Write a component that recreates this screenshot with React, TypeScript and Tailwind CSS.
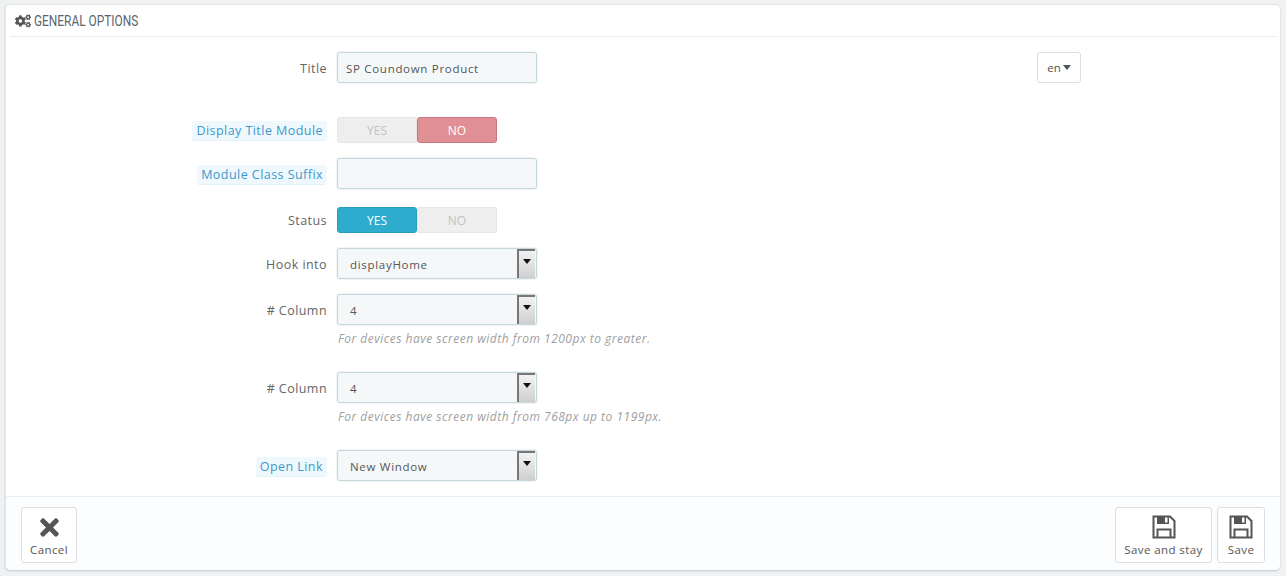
import { FaCogs, FaTimes } from "react-icons/fa";

const font = { fontFamily: '"Open Sans", sans-serif' };

function Label({ text, hint, tight }: { text: string; hint?: boolean; tight?: boolean }) {
  return (
    <div className="w-[331px] flex justify-end pr-[10px] shrink-0">
      {hint ? (
        <span className="mt-[2px] bg-[#eff8fd] text-[#3a98cc] rounded-[3px] px-[4px] h-[20px] leading-[20px] text-[12.5px] tracking-[0.45px] border-b border-[#e3f1fa]">{text}</span>
      ) : (
        <span className={tight ? "mt-[2px] text-[#666] text-[12.5px] tracking-[0.45px]" : "mt-[4px] text-[#666] text-[12.5px] tracking-[0.45px]"}>{text}</span>
      )}
    </div>
  );
}

function TextBox({ value }: { value?: string }) {
  return (
    <div className="w-[200px] h-[31px] bg-[#f5f8f9] border border-[#c7d6db] rounded-[3px] shadow-[0_0_0_1px_rgba(199,214,219,0.25)] pl-[8px] leading-[31px] text-[11.5px] tracking-[0.7px] text-[#555]">
      {value}
    </div>
  );
}

function Toggle({ on }: { on: "yes" | "no" }) {
  return (
    <div className="w-[160px] h-[26px] flex text-[12px] leading-[25px] text-center">
      <div className={on === "yes" ? "w-[80px] bg-[#2eacce] border border-[#2a9dbd] rounded-[3px] text-white" : "w-[80px] bg-[#eeeeee] border border-[#e6e6e6] rounded-l-[3px] text-[#c2c2c2]"}>YES</div>
      <div className={on === "no" ? "w-[80px] bg-[#e08f95] border border-[#c9777e] rounded-[3px] text-white" : "w-[80px] bg-[#eeeeee] border border-[#e6e6e6] rounded-r-[3px] text-[#c2c2c2]"}>NO</div>
    </div>
  );
}

function Select({ value }: { value: string }) {
  return (
    <div className="w-[200px] h-[31px] bg-[#f5f8f9] border border-[#c7d6db] rounded-[3px] shadow-[0_0_0_1px_rgba(199,214,219,0.25)] flex justify-between items-stretch">
      <span className="pl-[12px] leading-[31px] text-[11.5px] tracking-[0.7px] text-[#555]">{value}</span>
      <div className="w-[18px] mr-[1px] bg-gradient-to-b from-[#f2f2f2] to-[#cfcfcf] border-l-2 border-t-2 border-[#777] flex justify-center pt-[8px]">
        <div className="w-0 h-0 border-x-[4px] border-x-transparent border-t-[5px] border-t-[#111]" />
      </div>
    </div>
  );
}

function Help({ text }: { text: string }) {
  return <p className="mt-[6px] pl-[1px] h-[16px] leading-[16px] text-[12px] italic tracking-[0.5px] text-[#a0a0a0] whitespace-nowrap">{text}</p>;
}

function Floppy() {
  return (
    <svg width="24" height="24" viewBox="0 0 24 24" className="text-[#555]">
      <path d="M1.5 1.5H18L22.5 6V22.5H1.5Z" fill="none" stroke="currentColor" strokeWidth="2" />
      <path d="M5 1.5H17V9H5Z" fill="currentColor" />
      <rect x="13" y="2.5" width="2.5" height="5" fill="#fff" />
      <path d="M5.5 22V14.5H18.5V22" fill="none" stroke="currentColor" strokeWidth="2" />
    </svg>
  );
}

function FootButton({ w, icon, label }: { w: string; icon: React.ReactNode; label: string }) {
  return (
    <div className={`${w} h-[56px] bg-white border border-[#dedede] rounded-[3px] flex flex-col items-center pt-[7px]`}>
      <div className="h-[24px] flex items-center">{icon}</div>
      <span className="mt-[3px] text-[11.5px] tracking-[0.4px] text-[#555] whitespace-nowrap leading-[16px]">{label}</span>
    </div>
  );
}

export default function App() {
  return (
    <div style={font} className="w-[1286px] h-[576px] bg-[#eff1f2] pt-[4px] pl-[5px] overflow-hidden">
      <div className="w-[1275px] h-[566px] bg-white rounded-[5px] border-l border-t border-[#e2e5e6] shadow-[0_1px_2px_rgba(0,0,0,0.18)] flex flex-col">
        <div className="mx-[4px] h-[32px] border-b border-[#eaeded] flex items-center pl-[5px] gap-[3px] text-[#555] shrink-0">
          <FaCogs className="text-[16px] text-[#555]" />
          <span className="mt-[2px] text-[14.5px] scale-x-[0.82] origin-left text-[#5a6570]" style={{ fontFamily: "Roboto, sans-serif" }}>GENERAL OPTIONS</span>
        </div>

        <div className="flex-1">
          <div className="mt-[15px] flex items-center">
            <Label text="Title" />
            <TextBox value="SP Coundown Product" />
            <div className="ml-[500px] w-[44px] h-[31px] bg-white border border-[#dedede] rounded-[3px] flex items-center justify-center gap-[2px] text-[11.5px] text-[#555]">
              en
              <div className="w-0 h-0 border-x-[4px] border-x-transparent border-t-[5px] border-t-[#555]" />
            </div>
          </div>
          <div className="mt-[34px] flex items-center">
            <Label text="Display Title Module" hint />
            <Toggle on="no" />
          </div>
          <div className="mt-[15px] flex items-center">
            <Label text="Module Class Suffix" hint />
            <TextBox />
          </div>
          <div className="mt-[18px] flex items-center">
            <Label text="Status" tight />
            <Toggle on="yes" />
          </div>
          <div className="mt-[15px] flex items-center">
            <Label text="Hook into" />
            <Select value="displayHome" />
          </div>
          <div className="mt-[15px] flex items-start">
            <div className="h-[31px] flex items-center"><Label text="# Column" /></div>
            <div>
              <Select value="4" />
              <Help text="For devices have screen width from 1200px to greater." />
            </div>
          </div>
          <div className="mt-[25px] flex items-start">
            <div className="h-[31px] flex items-center"><Label text="# Column" /></div>
            <div>
              <Select value="4" />
              <Help text="For devices have screen width from 768px up to 1199px." />
            </div>
          </div>
          <div className="mt-[25px] flex items-center">
            <Label text="Open Link" hint />
            <Select value="New Window" />
          </div>
        </div>

        <div className="h-[74px] shrink-0 bg-[#fcfdfe] border-t border-[#eaeded] rounded-b-[5px] flex justify-between pl-[15px] pr-[15px] pt-[10px]">
          <FootButton w="w-[56px]" icon={<FaTimes className="text-[27px] text-[#555]" />} label="Cancel" />
          <div className="flex gap-[5px]">
            <FootButton w="w-[97px]" icon={<Floppy />} label="Save and stay" />
            <FootButton w="w-[48px]" icon={<Floppy />} label="Save" />
          </div>
        </div>
      </div>
    </div>
  );
}
